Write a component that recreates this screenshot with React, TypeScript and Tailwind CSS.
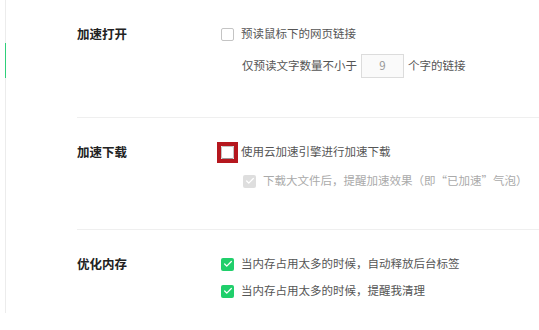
import { Check } from "lucide-react";

function Box({ state }: { state: "off" | "on" | "disabled" }) {
  if (state === "on")
    return (
      <span className="flex h-[13px] w-[13px] shrink-0 items-center justify-center rounded-[2px] bg-[#20cf6b]">
        <Check className="h-[10px] w-[10px] text-white" strokeWidth={3} />
      </span>
    );
  if (state === "disabled")
    return (
      <span className="flex h-[13px] w-[13px] shrink-0 items-center justify-center rounded-[2px] bg-[#dedede]">
        <Check className="h-[10px] w-[10px] text-white" strokeWidth={3} />
      </span>
    );
  return <span className="h-[13px] w-[13px] shrink-0 rounded-[2px] border border-[#c4c4c4] bg-white" />;
}

export default function App() {
  return (
    <div className="h-[330px] w-[539px] bg-white font-['Noto_Sans_CJK_SC','Microsoft_YaHei',sans-serif]">
      <div className="ml-[5px] flex h-[313px]">
        {/* side rail with active marker */}
        <div className="flex w-px flex-col bg-[#ececec]">
          <div className="mt-[43px] h-[35px] w-px bg-[#2fd07a]" />
        </div>

        <div className="flex-1 pl-[71px]">
          {/* 加速打开 */}
          <section className="flex h-[118px] border-b border-[#efefef] pt-6">
            <h3 className="w-[144px] text-[12.5px] font-bold leading-5 text-[#222]">加速打开</h3>
            <div className="flex flex-col gap-[10px]">
              <label className="flex h-5 items-center gap-[7px] text-[11.5px] text-[#555]">
                <Box state="off" />
                预读鼠标下的网页链接
              </label>
              <div className="ml-[21px] flex h-6 items-center gap-1 text-[11.5px] text-[#555]">
                仅预读文字数量不小于
                <span className="flex h-6 w-[43px] items-center justify-center border border-[#dcdcdc] bg-[#fafafa] text-[#999]">
                  9
                </span>
                个字的链接
              </div>
            </div>
          </section>

          {/* 加速下载 */}
          <section className="flex h-[112px] border-b border-[#efefef] pt-6">
            <h3 className="w-[144px] text-[12.5px] font-bold leading-5 text-[#222]">加速下载</h3>
            <div className="flex flex-col gap-[9px]">
              <label className="flex h-5 items-center gap-[7px] text-[11.5px] text-[#555]">
                <span className="outline-[4px] outline-solid outline-[#b5171e]">
                  <span className="flex h-[13px] w-[13px] rounded-[2px] border border-[#c4c4c4] border-b-[#999] bg-white" />
                </span>
                使用云加速引擎进行加速下载
              </label>
              <label className="ml-[22px] flex h-5 items-center gap-[7px] text-[11.5px] text-[#aaa]">
                <Box state="disabled" />
                下载大文件后，提醒加速效果（即“已加速”气泡）
              </label>
            </div>
          </section>

          {/* 优化内存 */}
          <section className="flex pt-6">
            <h3 className="w-[144px] text-[12.5px] font-bold leading-5 text-[#222]">优化内存</h3>
            <div className="flex flex-col gap-[7px]">
              <label className="flex h-5 items-center gap-[7px] text-[11.5px] text-[#555]">
                <Box state="on" />
                当内存占用太多的时候，自动释放后台标签
              </label>
              <label className="flex h-5 items-center gap-[7px] text-[11.5px] text-[#555]">
                <Box state="on" />
                当内存占用太多的时候，提醒我清理
              </label>
            </div>
          </section>
        </div>
      </div>
    </div>
  );
}
